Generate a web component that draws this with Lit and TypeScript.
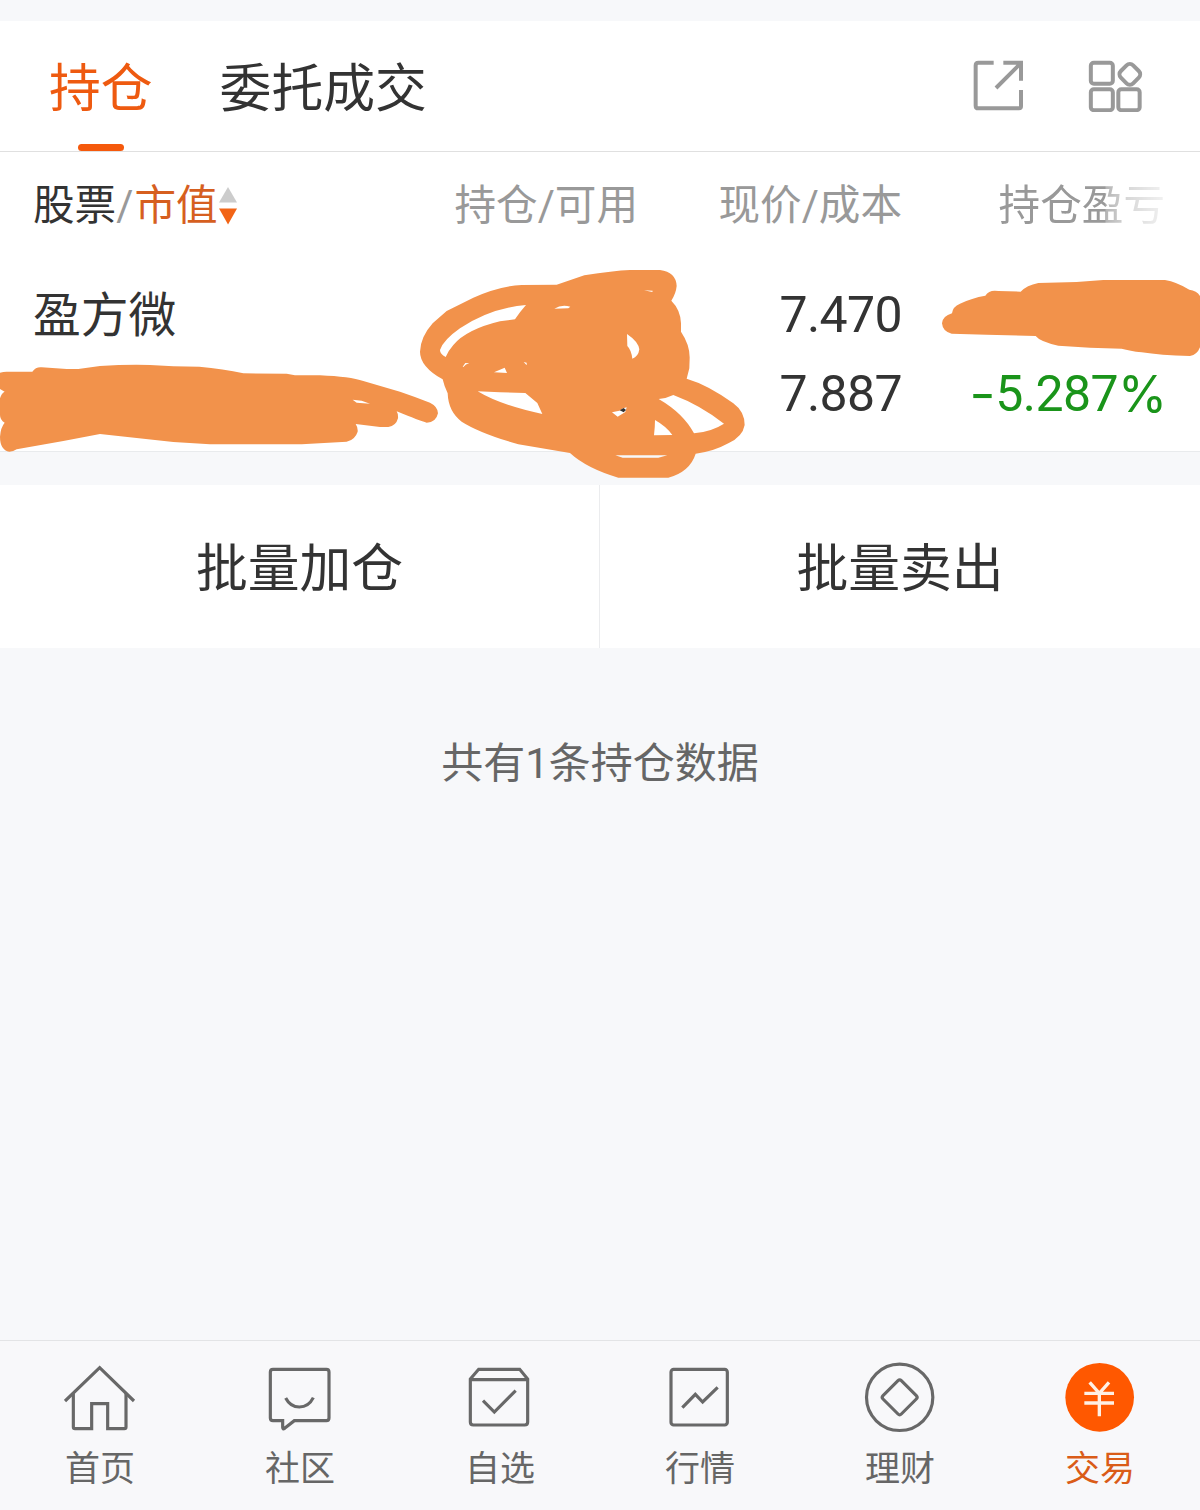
import { LitElement, html, css, svg } from "lit";
import { customElement, state } from "lit/decorators.js";
import { classMap } from "lit/directives/class-map.js";

interface NavItem {
  label: string;
  viewBox: string;
  art: unknown;
}

const NAV: NavItem[] = [
  {
    label: "首页",
    viewBox: "192 96 216 216",
    art: svg`<path d="M195 213 L299 113 L402 213"/><path d="M220 190 V291 Q220 296 225 296 H275 V221 H323 V296 H373 Q378 296 378 291 V190"/>`,
  },
  {
    label: "社区",
    viewBox: "792 96 216 216",
    art: svg`<path d="M819 118 H979 Q987 118 987 126 V264 Q987 272 979 272 H883 L854 295 Q848 299 848 292 V272 H819 Q811 272 811 264 V126 Q811 118 819 118Z"/><path d="M857 204 Q871 231 898 231 Q926 231 940 203"/>`,
  },
  {
    label: "自选",
    viewBox: "192 96 216 216",
    art: svg`<path d="M211 147 L236 118 H359 L383 147 V276 Q383 285 374 285 H220 Q211 285 211 276Z M211 149 H383"/><path d="M249 212 L283 246 L347 182"/>`,
  },
  {
    label: "行情",
    viewBox: "792 96 216 216",
    art: svg`<rect x="813" y="118" width="169" height="167" rx="8"/><path d="M847 233 L886 193 L908 216 L953 172"/>`,
  },
  {
    label: "理财",
    viewBox: "192 96 216 216",
    art: svg`<circle cx="299" cy="202" r="99.5"/><path d="M304 152 L349 197 Q354 202 349 207 L304 252 Q299 257 294 252 L249 207 Q244 202 249 197 L294 152 Q299 147 304 152Z"/>`,
  },
  {
    label: "交易",
    viewBox: "792 96 216 216",
    art: svg`<circle class="disc" cx="899" cy="202" r="103"/><path class="yen" d="M869 157 L898 190 L927 157 M853 190 H942 M853 219 H942 M898 190 V259"/>`,
  },
];

@customElement("app-nav")
class AppNav extends LitElement {
  @state() active = 5;

  static styles = css`
    :host {
      display: grid;
      grid-template-columns: repeat(6, 1fr);
      height: 169px;
      border-top: 1px solid #e3e4e6;
      background: #f8f8fa;
    }
    .item {
      display: flex;
      flex-direction: column;
      align-items: center;
      padding-top: 21px;
      color: #666;
      font-size: 35px;
      line-height: 48px;
      cursor: pointer;
    }
    .item.on {
      color: #da5c18;
    }
    .label {
      margin: 12px 0 0 0;
    }
    svg {
      display: block;
      width: 72px;
      height: 72px;
      fill: none;
      stroke: #686868;
      stroke-width: 9.5;
    }
    .disc {
      fill: #ff5800;
      stroke: none;
    }
    .yen {
      stroke: #fff0e4;
      stroke-width: 10;
    }
  `;

  render() {
    return NAV.map(
      (n, i) => html`<div
        class=${classMap({ item: true, on: i === this.active })}
        @click=${() => (this.active = i)}
      >
        <svg viewBox=${n.viewBox}>${n.art}</svg>
        <span class="label">${n.label}</span>
      </div>`
    );
  }
}

@customElement("app-root")
class AppRoot extends LitElement {
  static styles = css`
    :host {
      display: flex;
      flex-direction: column;
      position: relative;
      box-sizing: border-box;
      width: 1200px;
      height: 1510px;
      padding-top: 21px;
      overflow: hidden;
      background: #f7f8fa;
      color: #333;
      font-family: Roboto, "Noto Sans CJK SC", sans-serif;
    }
    .tabs {
      display: flex;
      height: 130px;
      box-sizing: content-box;
      padding: 0 57px 0 49px;
      background: #fff;
      border-bottom: 1px solid #e0e0e0;
    }
    .tab {
      display: flex;
      flex-direction: column;
      align-items: center;
      justify-content: space-between;
      margin-right: 67px;
      padding-top: 31px;
      font-size: 51.8px;
      line-height: 76px;
      white-space: nowrap;
    }
    .tab.on {
      color: #ee5a10;
    }
    .bar {
      width: 46px;
      height: 7px;
      border-radius: 4px;
      background: #f5590c;
    }
    .tools {
      display: flex;
      gap: 62px;
      margin-left: auto;
      padding-top: 37px;
    }
    .tools svg {
      height: 54px;
      fill: none;
      stroke: #999;
      stroke-width: 12;
    }
    .share {
      width: 54px;
    }
    .apps {
      width: 60px;
      margin-right: -3px;
    }
    .holdings {
      height: 299px;
      background: #fff;
      border-bottom: 1px solid #e9ebed;
    }
    .row {
      display: grid;
      grid-template-columns: 342px 263px 264px 262px;
      padding: 0 36px 0 33px;
      text-align: right;
      white-space: nowrap;
    }
    .head {
      padding-top: 24px;
      font-size: 41.6px;
      line-height: 60px;
      color: #999;
    }
    .name {
      display: flex;
      align-items: center;
      text-align: left;
    }
    .dark {
      color: #333;
    }
    .hot {
      color: #d65f1f;
    }
    .slash {
      margin: 0 1px 0 0;
    }
    .sort {
      width: 18px;
      height: 38px;
      margin: 0 0 1px 1px;
    }
    .fade {
      margin-right: -1px;
      -webkit-mask-image: linear-gradient(90deg, #000 203px, rgba(0, 0, 0, 0.72) 204px, rgba(0, 0, 0, 0.38) 226px, rgba(0, 0, 0, 0.12) 264px);
      mask-image: linear-gradient(90deg, #000 203px, rgba(0, 0, 0, 0.72) 204px, rgba(0, 0, 0, 0.38) 226px, rgba(0, 0, 0, 0.12) 264px);
    }
    .stock {
      padding-top: 39px;
      font-size: 50px;
      line-height: 79px;
    }
    .stock .name {
      padding-top: 4px;
      font-size: 47.8px;
      line-height: 75px;
    }
    .num {
      line-height: 80px;
      height: 79px;
      letter-spacing: -0.6px;
    }
    .down {
      display: flex;
      justify-content: flex-end;
      color: #1a941a;
    }
    .sign,
    .pct {
      font-family: Inter, sans-serif;
      font-weight: 400;
      letter-spacing: 0;
    }
    .sign {
      transform: scaleX(1.15);
      margin-right: 1px;
    }
    .pct {
      margin: 0 -3px 0 0;
    }
    .actions {
      display: grid;
      grid-template-columns: 599px 1fr;
      gap: 1px;
      height: 163px;
      margin-top: 33px;
      background: #ebecee;
    }
    .action {
      display: flex;
      align-items: center;
      justify-content: center;
      padding: 6px 0 0 0;
      background: #fff;
      font-size: 51.8px;
      line-height: 76px;
    }
    .total {
      flex: 1;
      padding-top: 86px;
      text-align: center;
      font-size: 42px;
      line-height: 60px;
      color: #666;
    }
    .ink {
      position: absolute;
      top: 0;
      left: 0;
      width: 1200px;
      height: 500px;
      fill: #f2924b;
      fill-rule: evenodd;
      pointer-events: none;
    }
    .fleck {
      fill: #333;
    }
  `;

  render() {
    return html`
      <div class="tabs">
        <div class="tab on"><span>持仓</span><span class="bar"></span></div>
        <div class="tab"><span>委托成交</span></div>
        <div class="tools">
          <svg class="share" viewBox="90 84 162 162">
            <path d="M161 98.500 H115 Q107 98.500 107 106.500 V227 Q107 235 115 235 H237 Q243 235 243 229 V180 M190 98.500 H243 V152 M241 101 L168 174" />
          </svg>
          <svg class="apps" viewBox="438 84 180 162">
            <rect x="452.500" y="98.500" width="66" height="63" rx="9" />
            <rect x="452.500" y="177.500" width="66" height="63" rx="9" />
            <rect x="535" y="177.500" width="64" height="63" rx="9" />
            <rect x="543.500" y="107" width="52" height="52" rx="14" transform="rotate(45 569.500 133)" />
          </svg>
        </div>
      </div>

      <div class="holdings">
        <div class="row head">
          <div class="name">
            <span class="dark">股票</span><span class="slash">/</span><span class="hot">市值</span>
            <svg class="sort" viewBox="0 0 18 38">
              <path fill="#ccc" d="M9 0 L18 15.500 H0Z" />
              <path fill="#f26416" d="M0 21.500 H18 L9 37.500Z" />
            </svg>
          </div>
          <div>持仓/可用</div>
          <div>现价/成本</div>
          <div class="fade">持仓盈亏</div>
        </div>
        <div class="row stock">
          <div class="name">盈方微</div>
          <div></div>
          <div class="num">7.470</div>
          <div></div>
          <div></div>
          <div></div>
          <div class="num">7.887</div>
          <div class="num down"><span class="sign">-</span><span>5.287</span><span class="pct">%</span></div>
        </div>
      </div>

      <div class="actions">
        <div class="action">批量加仓</div>
        <div class="action">批量卖出</div>
      </div>
      <div class="total">共有1条持仓数据</div>
      <app-nav></app-nav>

      <svg class="ink" viewBox="0 0 1200 500">
        <g transform="translate(0 340) scale(.33333)">
          <path d="M0 98 Q10 95 20 95 L97 95 Q108 80 125 82 L200 87 L235 87 L300 78 Q380 73 450 75 L520 79 L598 80 Q670 86 730 100 L860 101 L885 106 L960 106 Q1050 110 1090 123 L1200 155 Q1250 172 1290 188 Q1314 200 1314 220 Q1308 248 1280 248 Q1260 243 1190 214 Q1195 222 1194 235 Q1188 258 1165 261 L1140 261 L1067 252 Q1074 262 1073 275 Q1065 300 1040 305 L905 313 L630 313 L520 306 L300 282 L190 303 L50 328 Q40 335 28 335 Q0 330 0 290 Q2 262 14 248 Q0 240 0 225 L0 175 Q4 160 14 155 L0 147Z M1058 179 L1085 182 L1110 191 L1070 188Z" />
        </g>
        <g transform="translate(400 250) scale(.33333)">
          <path d="M60 305 Q62 260 98 220 L140 183 L220 143 Q300 108 365 105 L470 104 L553 76 Q640 62 690 60 L780 60 Q828 66 830 108 Q828 130 814 152 Q842 180 843 220 L843 245 Q870 285 869 325 L868 355 L860 386 Q925 405 1000 460 Q1034 485 1034 525 Q1028 560 985 580 Q940 605 887 611 Q870 665 805 683 L655 683 Q560 655 510 609 L355 583 Q240 550 185 515 Q145 485 143 430 Q133 410 128 388 Q60 350 60 305Z
            M120 300 Q130 270 180 235 Q270 175 378 165 Q360 185 345 208 L300 214 Q200 238 160 285 Q145 302 137 321 Q120 312 120 300Z
            M463 176 Q485 162 511 170 L505 175Z
            M732 121 L758 122 L757 126Z
            M681 252 Q715 275 718 298 Q715 320 697 326 Q694 300 682 288Z
            M188 350 L196 339 L208 340 Q197 342 190 351Z
            M282 367 L314 353 L321 369Z
            M371 336 L380 338 L380 346Z
            M233 424 L300 427 L376 429 L412 459 L427 492 Q300 465 233 424Z
            M776 447 Q800 445 820 435 Q900 465 972 521 Q935 545 882 550 Q850 490 776 447Z
            M765 510 Q800 530 817 555 L762 556 Q765 530 765 510Z
            M646 616 L802 616 L775 623 L668 623Z
            M636 487 L658 482 Q670 473 680 472 L676 486 L653 500Z" />
          <path class="fleck" d="M659 481 L671 474 L678 480 L671 487Z" />
        </g>
        <g transform="translate(920 160) scale(.33333)">
          <path d="M66 490 Q68 468 96 460 Q98 440 120 431 Q155 414 196 407 Q208 388 235 393 L302 395 Q320 376 355 369 L470 366 L550 360 L735 360 Q770 366 808 389 Q830 391 840 408 L840 562 Q832 584 810 588 Q720 586 665 577 Q630 573 605 566 L510 563 L415 557 Q360 545 347 528 L200 524 L95 521 Q68 515 66 490Z" />
        </g>
      </svg>
    `;
  }
}
